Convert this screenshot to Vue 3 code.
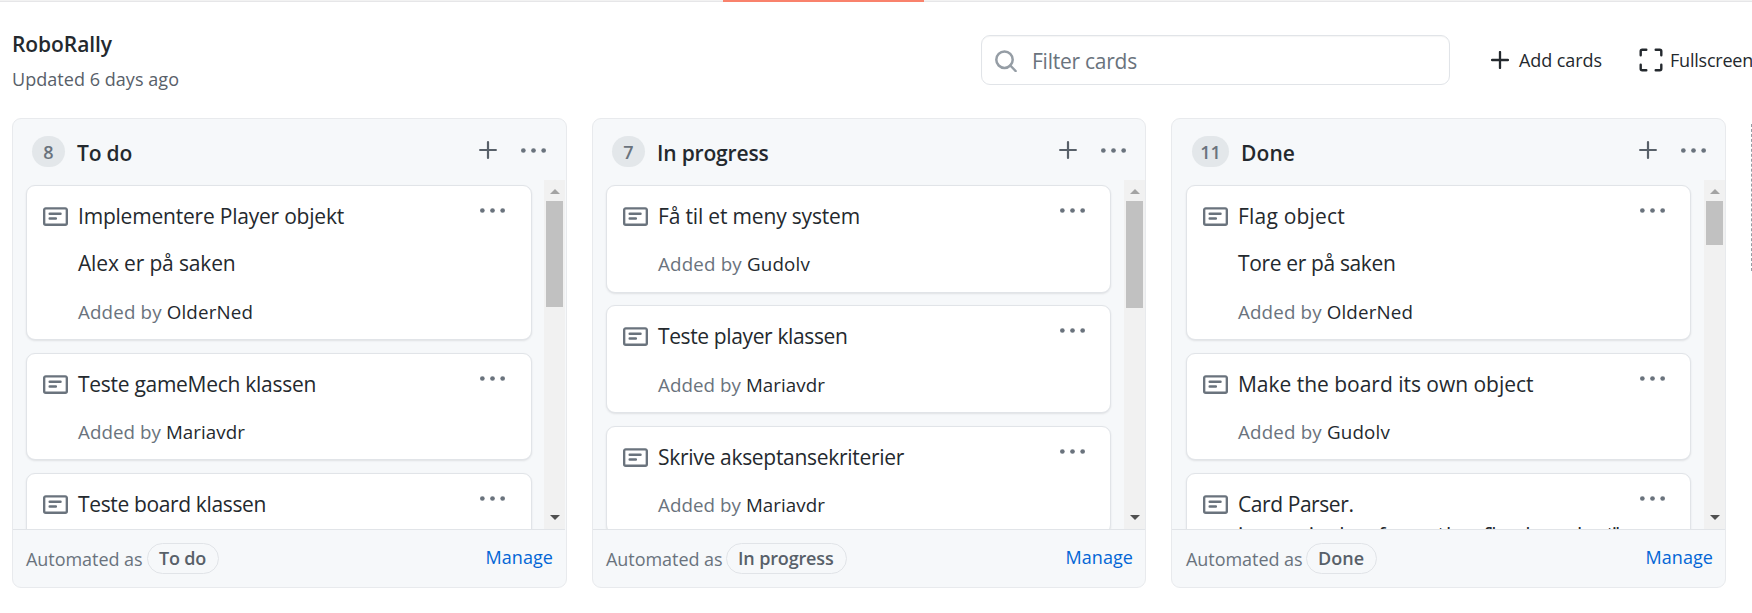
<script setup>
// Spreads an inline text over a given width in pixels by adjusting its tracking.
const vFit = {
  mounted(el, { value }) {
    const natural = el.getBoundingClientRect().width
    el.style.letterSpacing = `${(value - natural) / el.textContent.length}px`
  },
}

const columns = [
  {
    count: 8, name: 'To do', nameWidth: 55, pillWidth: 47, thumb: 106,
    cards: [
      { lines: [['Implementere Player objekt', 266], ['Alex er på saken', 157.5]], by: 'OlderNed', byWidth: 175 },
      { lines: [['Teste gameMech klassen', 238]], by: 'Mariavdr', byWidth: 167 },
      { lines: [['Teste board klassen', 188]] },
    ],
  },
  {
    count: 7, name: 'In progress', nameWidth: 111.5, pillWidth: 95.5, thumb: 107,
    cards: [
      { lines: [['Få til et meny system', 202]], by: 'Gudolv', byWidth: 152 },
      { lines: [['Teste player klassen', 189.5]], by: 'Mariavdr', byWidth: 167 },
      { lines: [['Skrive akseptansekriterier', 246]], by: 'Mariavdr', byWidth: 167 },
    ],
  },
  {
    count: 11, name: 'Done', nameWidth: 54, pillWidth: 46, thumb: 44,
    cards: [
      { lines: [['Flag object', 107], ['Tore er på saken', 157.5]], by: 'OlderNed', byWidth: 175 },
      { lines: [['Make the board its own object', 295.5]], by: 'Gudolv', byWidth: 152 },
      { lines: [['Card Parser.', 115.5], ['i samme i no bare for samt b en filen da sess bra til', 380]], tight: true },
    ],
  },
]
</script>

<template>
  <div class="page">
    <div class="tabline"><div class="tab-active"></div></div>

    <header class="top">
      <div class="project">
        <h1><span v-fit="100">RoboRally</span></h1>
        <p><span v-fit="167">Updated 6 days ago</span></p>
      </div>
      <div class="filter">
        <svg class="search" viewBox="0 0 22 22" fill="none" stroke="#959da5" stroke-width="2.5">
          <circle cx="9.5" cy="9.7" r="8.2" />
          <path d="M15.3 15.5l5.3 5.5" stroke-linecap="round" />
        </svg>
        <span v-fit="105">Filter cards</span>
      </div>
      <button class="action add">
        <svg width="18" height="18" viewBox="0 0 18 18" stroke="#24292e" stroke-width="2.3" stroke-linecap="round">
          <path d="M9 1.1v15.8M1.1 9h15.8" />
        </svg>
        <span v-fit="83">Add cards</span>
      </button>
      <button class="action full">
        <svg width="24" height="24" viewBox="0 0 24 24" fill="none" stroke="#24292e" stroke-width="2.4" stroke-linecap="round">
          <path d="M1.7 7.3V3.2a1.5 1.5 0 0 1 1.5-1.5H7.3M16.7 1.7h4.1a1.5 1.5 0 0 1 1.5 1.5V7.3M22.3 16.7v4.1a1.5 1.5 0 0 1-1.5 1.5H16.7M7.3 22.3H3.2a1.5 1.5 0 0 1-1.5-1.5V16.7" />
        </svg>
        <span v-fit="83">Fullscreen</span>
      </button>
    </header>

    <main class="board">
      <section v-for="col in columns" :key="col.name" class="column">
        <div class="column-head">
          <span class="count" :class="{ wide: col.count > 9 }">{{ col.count }}</span>
          <h2><span v-fit="col.nameWidth">{{ col.name }}</span></h2>
          <svg class="plus" width="18" height="18" viewBox="0 0 18 18" stroke="#586069" stroke-width="2.2" stroke-linecap="round">
            <path d="M9 1.1v15.8M1.1 9h15.8" />
          </svg>
          <svg class="dots" width="25" height="25" viewBox="0 0 16 16" fill="#6a737d">
            <circle cx="1.5" cy="8" r="1.5" /><circle cx="8" cy="8" r="1.5" /><circle cx="14.5" cy="8" r="1.5" />
          </svg>
        </div>

        <div class="column-body">
          <div class="list">
            <article v-for="(card, i) in col.cards" :key="i" class="card">
              <svg class="note" width="25" height="25" viewBox="0 0 16 16" fill="#6a737d" fill-rule="evenodd">
                <path d="M0 3.75C0 2.784.784 2 1.75 2h12.5c.966 0 1.75.784 1.75 1.75v8.5A1.75 1.75 0 0 1 14.25 14H1.75A1.75 1.75 0 0 1 0 12.25v-8.5zm1.75-.25a.25.25 0 0 0-.25.25v8.5c0 .138.112.25.25.25h12.5a.25.25 0 0 0 .25-.25v-8.5a.25.25 0 0 0-.25-.25H1.75zM3.5 6.25a.75.75 0 0 1 .75-.75h7a.75.75 0 0 1 0 1.5h-7a.75.75 0 0 1-.75-.75zm.75 2.25a.75.75 0 0 0 0 1.5h4a.75.75 0 0 0 0-1.5h-4z" />
              </svg>
              <div class="text" :class="{ tight: card.tight }">
                <p v-for="line in card.lines" :key="line[0]"><span v-fit="line[1]">{{ line[0] }}</span></p>
                <small v-if="card.by"><span v-fit="card.byWidth">Added by <b>{{ card.by }}</b></span></small>
              </div>
              <svg class="dots" width="25" height="25" viewBox="0 0 16 16" fill="#6a737d">
                <circle cx="1.5" cy="8" r="1.5" /><circle cx="8" cy="8" r="1.5" /><circle cx="14.5" cy="8" r="1.5" />
              </svg>
            </article>
          </div>
          <div class="scrollbar">
            <div class="arrow up"></div>
            <div class="thumb" :style="{ height: col.thumb + 'px' }"></div>
            <div class="arrow down"></div>
          </div>
        </div>

        <footer class="column-foot">
          <span class="auto"><span v-fit="116.5">Automated as</span></span>
          <span class="pill"><span v-fit="col.pillWidth">{{ col.name }}</span></span>
          <a class="manage"><span v-fit="67.5">Manage</span></a>
        </footer>
      </section>
      <div class="add-column"></div>
    </main>
  </div>
</template>

<style>
body {
  margin: 0;
  background: #fff;
  overflow: hidden;
}
</style>

<style scoped>
* {
  box-sizing: border-box;
}
.page {
  width: 1752px;
  height: 613px;
  overflow: hidden;
  background: #fff;
  color: #24292e;
  font-family: "Open Sans", "Noto Sans", sans-serif;
  font-size: 21px;
  line-height: 30px;
  white-space: nowrap;
}
svg {
  display: block;
  flex: none;
}
h1, h2, p {
  margin: 0;
  font-size: inherit;
  font-weight: inherit;
}
.tabline {
  height: 2px;
  background: #f2f2f2;
  border-bottom: 1px solid #e6e6e8;
}
.tab-active {
  width: 201px;
  height: 2px;
  margin-left: 723px;
  background: #f9826c;
}
.top {
  display: flex;
  align-items: flex-start;
  height: 116px;
  padding: 27px 0 0 12px;
}
.project {
  flex: none;
  width: 969px;
}
.project h1 {
  font-weight: 600;
}
.project p {
  margin-top: 6px;
  font-size: 18px;
  line-height: 28px;
  color: #586069;
}
.filter {
  display: flex;
  flex: none;
  align-items: center;
  width: 469px;
  height: 50px;
  margin-top: 6px;
  padding-left: 13px;
  border: 1px solid #e1e4e8;
  border-radius: 9px;
  box-shadow: inset 0 1px 1px rgba(27, 31, 35, 0.04);
  color: #6a737d;
}
.search {
  width: 22px;
  height: 22px;
  margin: 2px 15px 0 0;
}
.filter span {
  margin-top: 1px;
}
.action {
  display: flex;
  align-items: center;
  flex: none;
  height: 28px;
  margin: 17px 0 0;
  padding: 0;
  border: 0;
  background: none;
  color: #24292e;
  font: 18px/28px "Open Sans", sans-serif;
}
.add {
  margin-left: 41px;
  gap: 10px;
}
.full {
  margin-left: 37px;
  gap: 7px;
}
.board {
  display: grid;
  grid-template-columns: 555px 554px 555px 300px;
  column-gap: 25px;
  padding-left: 12px;
  height: 470px;
}
.column {
  display: flex;
  flex-direction: column;
  height: 470px;
  border: 1px solid #e8eaed;
  border-radius: 9px;
  background: #f6f8fa;
}
.column:first-child {
  padding-right: 1px;
}
.column-head {
  display: flex;
  align-items: flex-start;
  height: 61px;
  padding: 17px 19px 0 19px;
}
.count {
  width: 33px;
  height: 31px;
  border-radius: 16px;
  background: #e3e7ea;
  color: #6a737d;
  font-size: 18px;
  font-weight: 600;
  line-height: 32px;
  text-align: center;
}
.count.wide {
  width: 37px;
  margin-left: 1px;
}
.column-head h2 {
  flex: 1;
  margin: 2px 0 0 12px;
  font-weight: 600;
}
.plus {
  margin: 5px 24px 0 0;
}
.column-head .dots {
  margin-top: 2px;
}
.column-body {
  display: flex;
  height: 349px;
}
.list {
  flex: 1;
  min-width: 0;
  padding: 5px 12px 0 13px;
  overflow: hidden;
}
.column:nth-child(2) .list {
  padding-right: 13px;
}
.column:nth-child(3) .list {
  padding-right: 13px;
  padding-left: 14px;
}
.card {
  display: flex;
  align-items: flex-start;
  margin-bottom: 12.5px;
  padding: 15px 25px 13.5px 16px;
  border: 1px solid #e1e4e8;
  border-radius: 9px;
  background: #fff;
  box-shadow: 0 1px 2px rgba(27, 31, 35, 0.1);
}
.column:first-child .card {
  padding-right: 26px;
}
.card:last-child {
  min-height: 108px;
}
.note {
  margin: 3px 10px 0 0;
}
.text {
  flex: 1;
  min-width: 0;
}
.text p + p {
  margin-top: 17.3px;
}
.text.tight p + p {
  margin-top: 1px;
}
.text small {
  display: block;
  margin-top: 19.3px;
  font-size: 18.75px;
  line-height: 28px;
  color: #6a737d;
}
.text b {
  font-weight: 400;
  color: #24292e;
}
.card .dots {
  margin-top: -3px;
}
.scrollbar {
  display: flex;
  flex-direction: column;
  align-items: center;
  width: 21px;
  background: #f1f1f1;
}
.arrow {
  width: 0;
  height: 0;
  border: 5px solid transparent;
}
.up {
  margin: 9px 0 7px;
  border-top: 0;
  border-bottom-color: #a3a3a3;
}
.thumb {
  width: 17px;
  background: #c1c1c1;
}
.down {
  margin: auto 0 9px;
  border-bottom: 0;
  border-top-color: #505050;
}
.column-foot {
  display: flex;
  align-items: flex-start;
  height: 58px;
  padding: 13px 12px 0 13px;
  border-top: 1px solid #e1e4e8;
  font-size: 18px;
  line-height: 28px;
}
.column:nth-child(3) .column-foot {
  padding-left: 14px;
}
.auto {
  width: 121px;
  margin-top: 2px;
  color: #6a737d;
}
.column:nth-child(2) .auto {
  width: 120px;
}
.column:nth-child(3) .auto {
  width: 120px;
}
.pill {
  height: 31px;
  padding: 0 12px 0 11px;
  border: 1px solid #e1e4e8;
  border-radius: 16px;
  color: #586069;
  font-weight: 600;
}
.manage {
  margin-left: auto;
  color: #0366d6;
}
.add-column {
  height: 147px;
  border-left: 1px dashed #959da5;
  margin-top: 6px;
}
</style>
